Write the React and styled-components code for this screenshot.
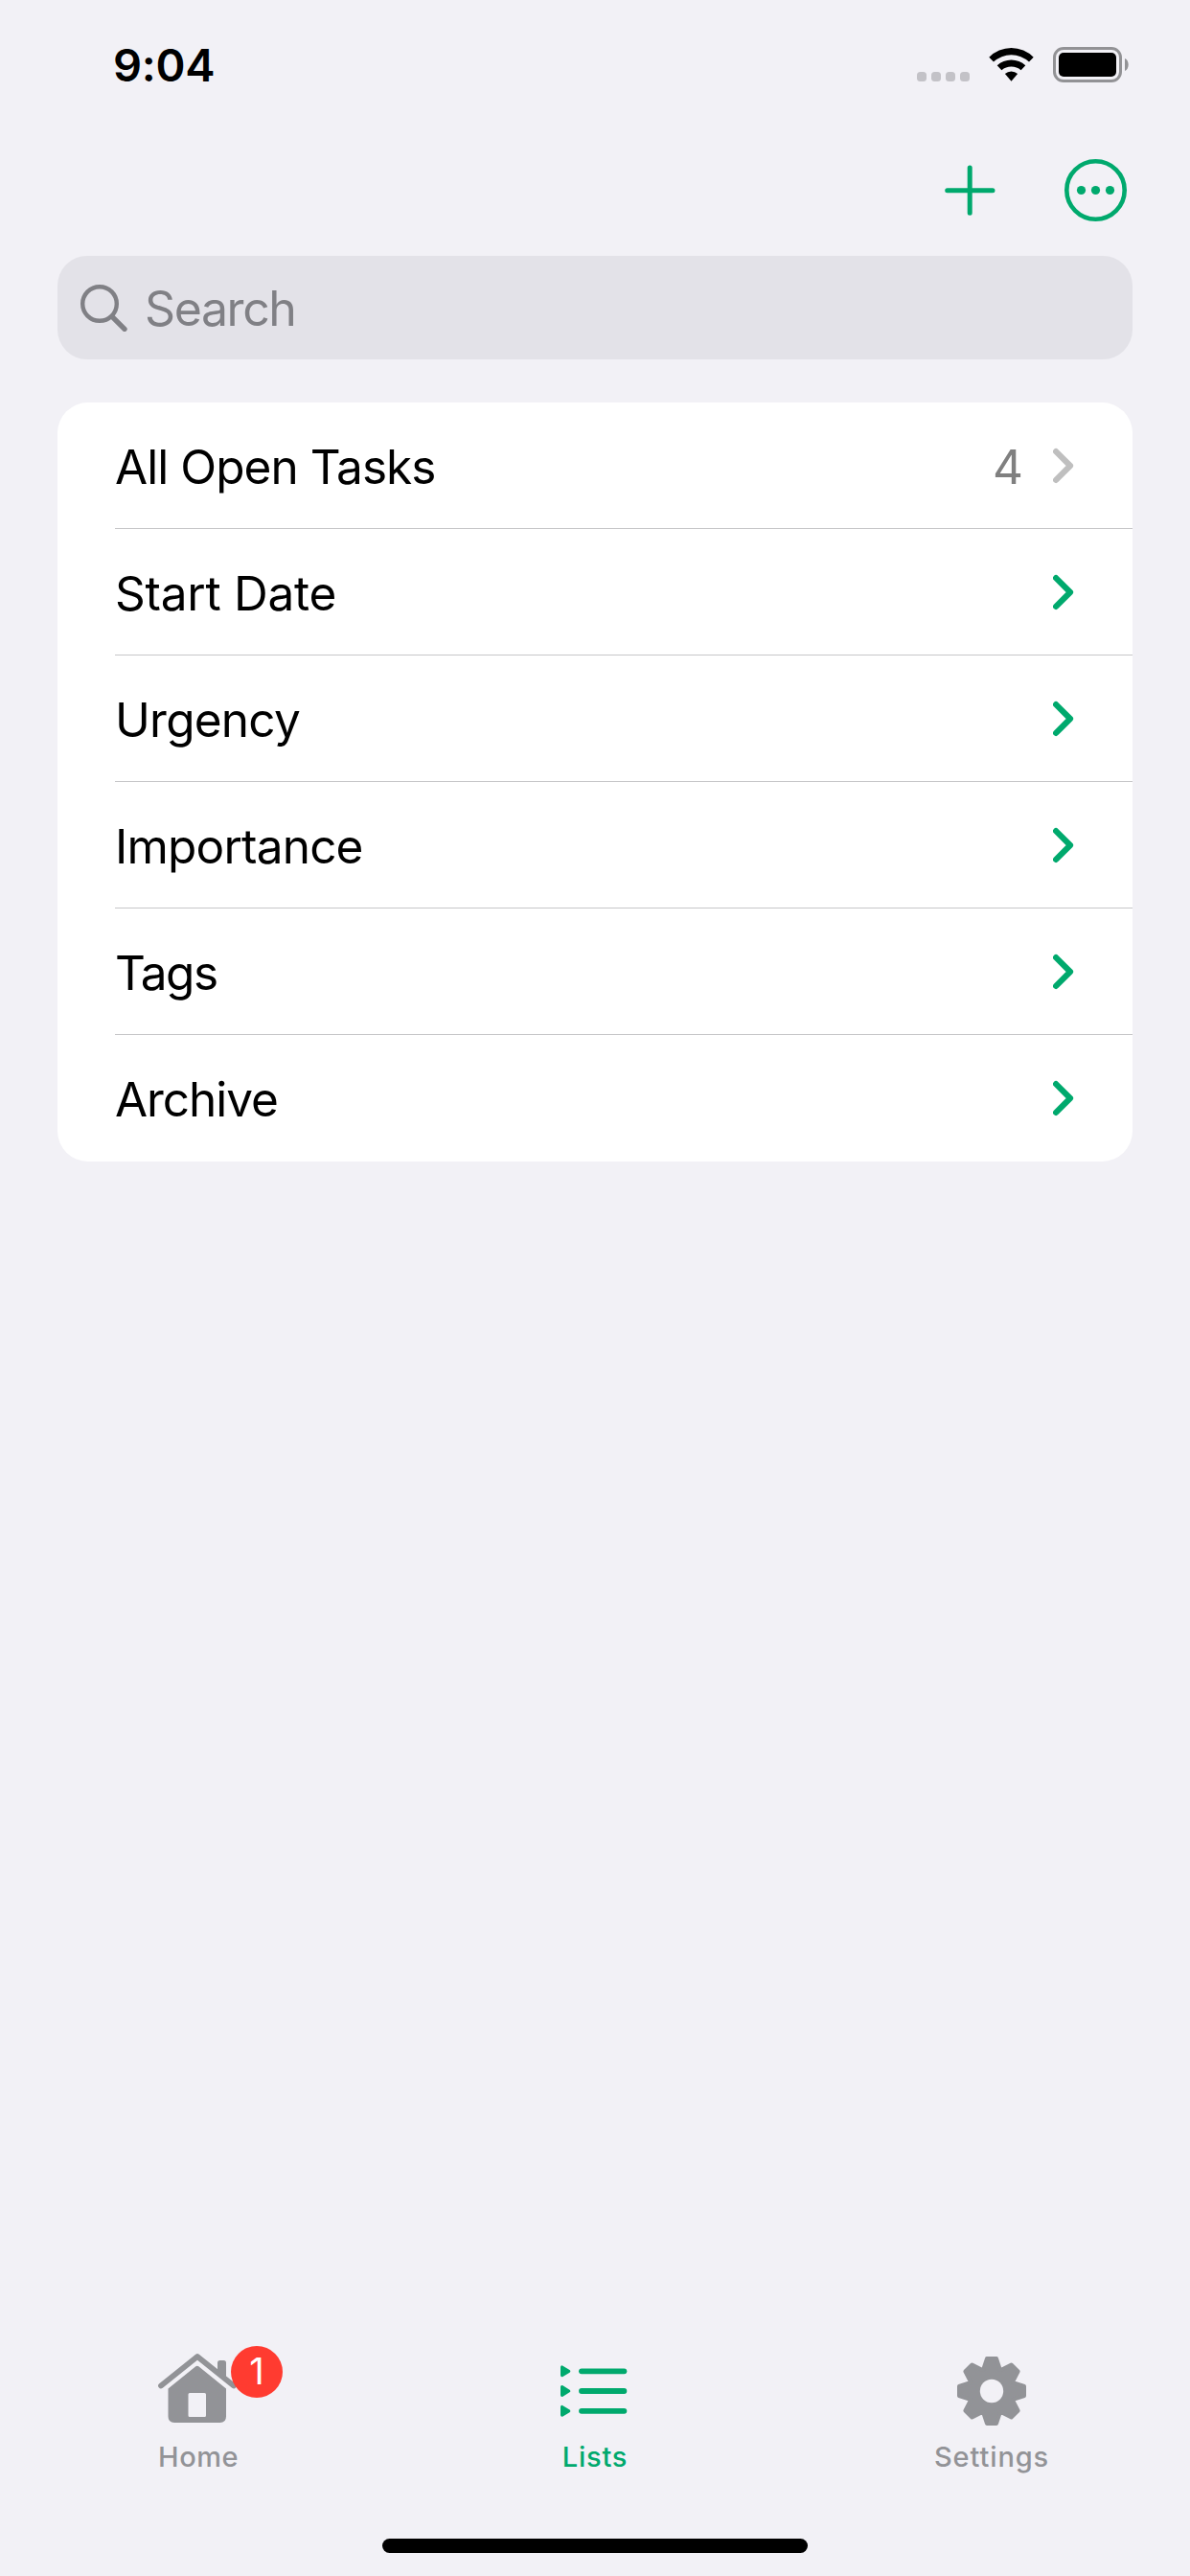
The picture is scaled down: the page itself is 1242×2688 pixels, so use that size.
import React from "react";
import styled, { createGlobalStyle } from "styled-components";

const GREEN = "#00a96d";
const GRAY = "#929397";

const GlobalStyle = createGlobalStyle`
  * { box-sizing: border-box; }
  body {
    margin: 0;
    background: #f2f1f6;
    font-family: Inter, "Liberation Sans", sans-serif;
  }
  svg { display: block; flex: none; }
`;

const Screen = styled.div`
  width: 1242px;
  height: 2688px;
  display: flex;
  flex-direction: column;
  background: #f2f1f6;
  overflow: hidden;
`;

const StatusBar = styled.header`
  height: 132px;
  flex: none;
  display: flex;
  justify-content: space-between;
  align-items: flex-start;
  padding: 40px 63px 0 118px;
`;

const Time = styled.span`
  font-size: 47px;
  font-weight: 600;
  line-height: 56px;
  letter-spacing: ${(p) => p.$tracking}px;
`;

const StatusIcons = styled.div`
  display: flex;
  align-items: flex-start;
  gap: 19px;
  padding-top: 9px;
`;

const Signal = styled.div`
  display: flex;
  gap: 5px;
  margin: 26px 1px 0 0;
`;

const SignalDot = styled.i`
  width: 10px;
  height: 10px;
  border-radius: 3.5px;
  background: #c3c2c7;
`;

const Toolbar = styled.nav`
  height: 135px;
  flex: none;
  display: flex;
  justify-content: flex-end;
  align-items: flex-start;
  gap: 72px;
  padding: 34px 66px 0 0;
`;

const IconButton = styled.button`
  border: 0;
  padding: 0;
  background: none;
  color: ${GREEN};
`;

const SearchField = styled.label`
  height: 108px;
  flex: none;
  margin: 0 60px;
  padding-left: 23px;
  display: flex;
  align-items: center;
  gap: 18px;
  border-radius: 31px;
  background: #e3e2e8;
  color: #808085;
`;

const Placeholder = styled.span`
  padding-top: 2px;
  font-size: 50px;
  line-height: 60px;
  letter-spacing: ${(p) => p.$tracking}px;
`;

const Card = styled.ul`
  list-style: none;
  margin: 45px 60px 0;
  padding: 0 0 0 60px;
  flex: none;
  border-radius: 32px;
  background: #fff;
`;

const Row = styled.li`
  height: 132px;
  display: flex;
  align-items: center;
  padding-right: 60px;
  box-shadow: ${(p) => (p.$last ? "none" : "inset 0 -1px #c6c6c8")};
`;

const RowLabel = styled.span`
  flex: 1;
  padding-top: 2px;
  font-size: 49.5px;
  line-height: 60px;
  color: #000;
  letter-spacing: ${(p) => p.$tracking}px;
`;

const Count = styled.span`
  padding-top: 2px;
  font-size: 49.5px;
  line-height: 60px;
  color: #808080;
  margin-right: 31px;
`;

const TabBar = styled.footer`
  margin-top: auto;
  height: 258px;
  flex: none;
  display: flex;
  flex-direction: column;
  align-items: center;
`;

const Tabs = styled.nav`
  align-self: stretch;
  display: flex;
  height: 219px;
`;

const Tab = styled.div`
  flex: 1;
  display: flex;
  flex-direction: column;
  align-items: center;
  padding-top: 18px;
  color: ${(p) => (p.$active ? GREEN : GRAY)};
`;

const TabIcon = styled.div`
  position: relative;
  height: 94px;
`;

const TabLabel = styled.span`
  margin-top: 4px;
  font-size: 29px;
  font-weight: 500;
  line-height: 36px;
  letter-spacing: ${(p) => p.$tracking}px;
`;

const Badge = styled.span`
  position: absolute;
  left: 81px;
  top: 0;
  width: 54px;
  height: 54px;
  border-radius: 50%;
  background: #ff3b30;
  color: #fff;
  font-size: 38px;
  line-height: 53px;
  text-align: center;
`;

const HomeIndicator = styled.div`
  width: 444px;
  height: 15px;
  border-radius: 8px;
  background: #000;
`;

const WifiIcon = () => (
  <svg width="48" height="37" viewBox="0 0 48 37">
    <path d="M.3 10.7A32.5 32.5 0 0 1 46.7 10.7L42 15.6A27 27 0 0 0 5 15.6Z" />
    <path d="M8.7 19.3A21.7 21.7 0 0 1 38.3 19.3L33.6 24.2A15.5 15.5 0 0 0 13.4 24.2Z" />
    <path d="M16.9 28.1A9.6 9.6 0 0 1 30.1 28.1L23.5 35.8Z" />
  </svg>
);

const BatteryIcon = () => (
  <svg width="80" height="37" viewBox="0 0 80 37">
    <rect x="1.5" y="1.5" width="69" height="34" rx="9.5" fill="none" stroke="#929295" strokeWidth="3" />
    <rect x="6" y="6" width="60" height="25" rx="5" />
    <path d="M75 12C79.9 14 79.9 23 75 25Z" fill="#929295" />
  </svg>
);

const PlusIcon = () => (
  <svg width="53" height="65" viewBox="0 0 53 65" fill="none" stroke="currentColor" strokeWidth="5" strokeLinecap="round">
    <path d="M26.2 9V56.3M2.7 32.7H50" />
  </svg>
);

const MoreIcon = () => (
  <svg width="65" height="65" viewBox="0 0 65 65" fill="currentColor">
    <circle cx="32.5" cy="32.5" r="30.2" fill="none" stroke="currentColor" strokeWidth="4.6" />
    <circle cx="17.5" cy="32.5" r="4.6" />
    <circle cx="32.5" cy="32.5" r="4.6" />
    <circle cx="47.5" cy="32.5" r="4.6" />
  </svg>
);

const SearchIcon = () => (
  <svg width="50" height="50" viewBox="0 0 50 50" fill="none" stroke="currentColor" strokeLinecap="round">
    <circle cx="21" cy="21" r="17.8" strokeWidth="4.4" />
    <path d="M34.5 34.8L47 47.3" strokeWidth="5.4" />
  </svg>
);

const Chevron = ({ color }) => (
  <svg width="23" height="38" viewBox="0 0 23 38" fill="none" stroke={color} strokeWidth="6.2" strokeLinecap="round" strokeLinejoin="round">
    <path d="M3.1 4.1L18 19L3.1 33.9" />
  </svg>
);

const HomeIcon = () => (
  <svg width="94" height="94" viewBox="1 0 94 94" fill="currentColor">
    <path d="M9 41.5L47 11L85 41.5" fill="none" stroke="currentColor" strokeWidth="5.8" strokeLinecap="round" strokeLinejoin="round" />
    <path d="M68 26V17.5Q68 15 70.5 15H74.5Q77 15 77 17.5V35Z" />
    <path
      fillRule="evenodd"
      d="M45.3 21.3Q46.8 20.2 48.3 21.3L77 44.5V73.5Q77 80 70.5 80H23Q16.500 80 16.500 73.5V44.5ZM39 49Q37.500 49 37.500 50.5V72.500Q37.500 74 39 74H54.500Q56 74 56 72.5V50.5Q56 49 54.500 49Z"
    />
  </svg>
);

const ListsIcon = () => (
  <svg width="72" height="94" viewBox="0 0 72 94" fill="currentColor" stroke="currentColor">
    {[26.3, 47, 67.8].map((y) => (
      <g key={y}>
        <path d={`M1.6 ${y - 4.3}V${y + 4.3}L8.7 ${y}Z`} strokeWidth="3.2" strokeLinejoin="round" />
        <path d={`M22 ${y}H66.400`} strokeWidth="5.8" strokeLinecap="round" />
      </g>
    ))}
  </svg>
);

const toothPoints = Array.from({ length: 8 }, (_, i) => {
  const a = (i * Math.PI) / 4;
  return [[-8.8, -22.4], [-5, -34], [5, -34], [8.8, -22.4]]
    .map(([x, y]) => `${(x * Math.cos(a) - y * Math.sin(a)).toFixed(2)},${(x * Math.sin(a) + y * Math.cos(a)).toFixed(2)}`)
    .join(" ");
}).join(" ");

const GearIcon = () => (
  <svg width="72" height="94" viewBox="-36 -47 72 94">
    <polygon points={toothPoints} fill="currentColor" stroke="currentColor" strokeWidth="4" strokeLinejoin="round" />
    <circle r="12.2" fill="#f2f1f6" />
  </svg>
);

const rows = [
  { label: "All Open Tasks", count: 4, tracking: -0.95 },
  { label: "Start Date", tracking: -0.25 },
  { label: "Urgency", tracking: -0.75 },
  { label: "Importance", tracking: -0.8 },
  { label: "Tags", tracking: -1.5 },
  { label: "Archive", tracking: -1.05 },
];

export default function App() {
  return (
    <>
      <GlobalStyle />
      <Screen>
        <StatusBar>
          <Time $tracking={-0.3}>9:04</Time>
          <StatusIcons>
            <Signal>
              <SignalDot /><SignalDot /><SignalDot /><SignalDot />
            </Signal>
            <WifiIcon />
            <BatteryIcon />
          </StatusIcons>
        </StatusBar>
        <Toolbar>
          <IconButton aria-label="Add"><PlusIcon /></IconButton>
          <IconButton aria-label="More"><MoreIcon /></IconButton>
        </Toolbar>
        <SearchField>
          <SearchIcon />
          <Placeholder $tracking={-1.4}>Search</Placeholder>
        </SearchField>
        <Card>
          {rows.map((row, i) => (
            <Row key={row.label} $last={i === rows.length - 1}>
              <RowLabel $tracking={row.tracking}>{row.label}</RowLabel>
              {row.count && <Count>{row.count}</Count>}
              <Chevron color={row.count ? "#bfbfbf" : GREEN} />
            </Row>
          ))}
        </Card>
        <TabBar>
          <Tabs>
            <Tab>
              <TabIcon><HomeIcon /><Badge>1</Badge></TabIcon>
              <TabLabel $tracking={0.5}>Home</TabLabel>
            </Tab>
            <Tab $active>
              <TabIcon><ListsIcon /></TabIcon>
              <TabLabel $tracking={0.8}>Lists</TabLabel>
            </Tab>
            <Tab>
              <TabIcon><GearIcon /></TabIcon>
              <TabLabel $tracking={0.9}>Settings</TabLabel>
            </Tab>
          </Tabs>
          <HomeIndicator />
        </TabBar>
      </Screen>
    </>
  );
}
